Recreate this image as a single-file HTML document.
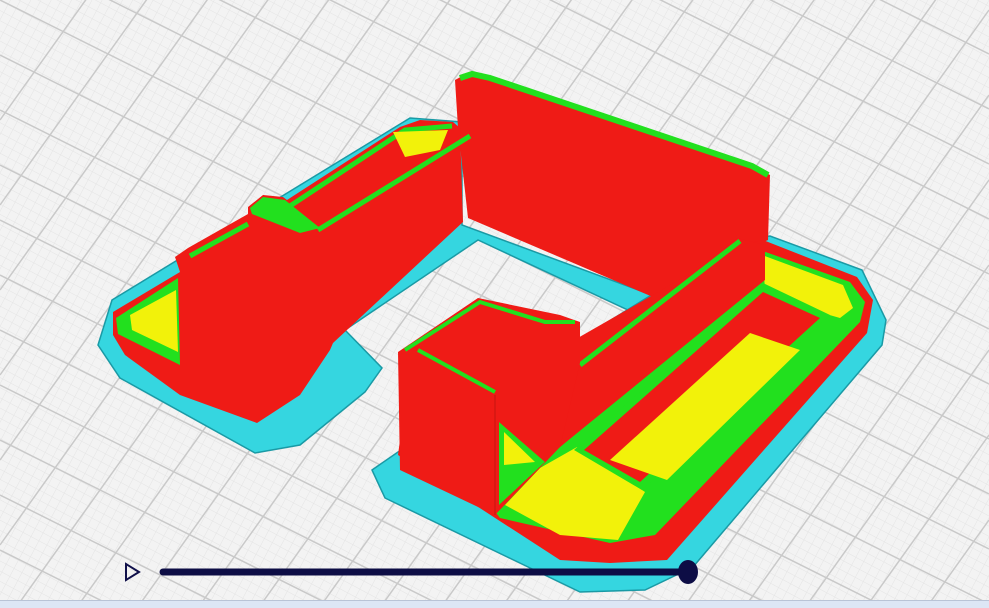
<!DOCTYPE html>
<html><head><meta charset="utf-8"><style>
html,body{margin:0;padding:0;width:989px;height:608px;overflow:hidden;background:#f1f1f1}
body{position:fixed;left:0;top:0}
svg{display:block;overflow:hidden}
</style></head><body>
<svg width="989" height="608" viewBox="0 0 989 608" xmlns="http://www.w3.org/2000/svg">
<defs>
<pattern id="fine" width="9" height="9" patternUnits="userSpaceOnUse" patternTransform="rotate(28)">
<path d="M0 0H9M0 0V9" stroke="#e4e4e4" stroke-width="1" fill="none"/>
</pattern>
</defs>
<rect width="989" height="608" fill="#f3f3f3"/>
<rect width="989" height="608" fill="url(#fine)"/>
<g stroke="#c9c9c9" stroke-width="1.5">
<line x1="0" y1="-440" x2="989" y2="54"/><line x1="0" y1="-385" x2="989" y2="109"/><line x1="0" y1="-330" x2="989" y2="164"/><line x1="0" y1="-275" x2="989" y2="219"/><line x1="0" y1="-220" x2="989" y2="274"/><line x1="0" y1="-165" x2="989" y2="329"/><line x1="0" y1="-110" x2="989" y2="384"/><line x1="0" y1="-55" x2="989" y2="439"/><line x1="0" y1="0" x2="989" y2="494"/><line x1="0" y1="55" x2="989" y2="549"/><line x1="0" y1="110" x2="989" y2="604"/><line x1="0" y1="165" x2="989" y2="659"/><line x1="0" y1="220" x2="989" y2="714"/><line x1="0" y1="275" x2="989" y2="769"/><line x1="0" y1="330" x2="989" y2="824"/><line x1="0" y1="385" x2="989" y2="879"/><line x1="0" y1="440" x2="989" y2="934"/><line x1="0" y1="495" x2="989" y2="989"/><line x1="0" y1="550" x2="989" y2="1044"/>
<line x1="0" y1="120" x2="989" y2="-1265"/><line x1="0" y1="205" x2="989" y2="-1180"/><line x1="0" y1="290" x2="989" y2="-1095"/><line x1="0" y1="375" x2="989" y2="-1010"/><line x1="0" y1="460" x2="989" y2="-925"/><line x1="0" y1="545" x2="989" y2="-840"/><line x1="0" y1="630" x2="989" y2="-755"/><line x1="0" y1="715" x2="989" y2="-670"/><line x1="0" y1="800" x2="989" y2="-585"/><line x1="0" y1="885" x2="989" y2="-500"/><line x1="0" y1="970" x2="989" y2="-415"/><line x1="0" y1="1055" x2="989" y2="-330"/><line x1="0" y1="1140" x2="989" y2="-245"/><line x1="0" y1="1225" x2="989" y2="-160"/><line x1="0" y1="1310" x2="989" y2="-75"/><line x1="0" y1="1395" x2="989" y2="10"/><line x1="0" y1="1480" x2="989" y2="95"/><line x1="0" y1="1565" x2="989" y2="180"/><line x1="0" y1="1650" x2="989" y2="265"/><line x1="0" y1="1735" x2="989" y2="350"/><line x1="0" y1="1820" x2="989" y2="435"/><line x1="0" y1="1905" x2="989" y2="520"/><line x1="0" y1="1990" x2="989" y2="605"/><line x1="0" y1="2075" x2="989" y2="690"/><line x1="0" y1="2160" x2="989" y2="775"/><line x1="0" y1="2245" x2="989" y2="860"/>
</g>
<path d="M98,345 L112,300 L410,118 L462,122 L462,225 L660,298 L645,318 L478,240 L345,330 L382,368 L365,392 L300,445 L255,453 L120,378 Z" fill="#35d6e0" stroke="#1a9aa5" stroke-width="1.5"/>
<path d="M372,470 L398,452 L740,240 L770,236 L862,270 L886,320 L882,345 L693,567 L645,590 L580,592 L385,498 Z" fill="#35d6e0" stroke="#1a9aa5" stroke-width="1.5"/>
<path d="M455,80 L470,72 L492,76 L752,165 L770,175 L768,240 L745,250 L720,262 L660,300 L468,218 L458,128 Z" fill="#ef1b16"/>
<path d="M460,78 L472,74 L490,78 L752,166 L768,175" stroke="#22e01e" stroke-width="6" fill="none"/>
<path d="M113,312 L180,272 L175,257 L188,248 L248,214 L248,207 L263,195 L283,197 L287,200 L400,127 L420,120 L453,122 L460,128 L463,222 L333,343 L330,350 L300,395 L257,423 L180,395 L125,355 L113,335 Z" fill="#ef1b16"/>
<path d="M116,318 L178,278 L180,365 L118,334 Z" fill="#22e01e"/>
<path d="M130,315 L176,290 L178,352 L132,330 Z" fill="#f2f20a"/>
<path d="M190,256 L248,224 M290,206 L405,130 L452,126 M318,230 L470,136" stroke="#22e01e" stroke-width="5" fill="none"/>
<path d="M393,132 L448,130 L440,150 L405,157 Z" fill="#f2f20a"/>
<path d="M250,208 L263,197 L285,200 L320,228 L300,233 L252,214 Z" fill="#22e01e"/>
<path d="M398,455 L560,560 L610,563 L667,560 L867,333 L873,300 L857,277 L763,240 L740,245 L400,440 Z" fill="#ef1b16"/>
<path d="M490,505 L560,447 L760,277 L760,250 L850,282 L865,302 L860,322 L655,535 L610,543 L500,518 Z" fill="#22e01e"/>
<path d="M762,255 L843,285 L853,308 L840,318 L826,314 L765,288 Z" fill="#f2f20a"/>
<path d="M505,505 L540,468 L577,447 L645,492 L618,540 L560,535 Z" fill="#f2f20a"/>
<path d="M574,450 L763,283 L830,315 L642,490 Z" fill="#22e01e"/>
<path d="M584,450 L763,292 L820,318 L640,482 Z" fill="#ef1b16"/>
<path d="M610,460 L750,333 L800,350 L667,480 Z" fill="#f2f20a"/>
<path d="M560,447 L580,363 L737,238 L765,245 L765,280 Z" fill="#ef1b16"/>
<path d="M580,365 L740,241" stroke="#22e01e" stroke-width="5"/>
<path d="M398,352 L478,298 L560,315 L580,322 L580,363 L560,447 L495,515 L400,470 Z" fill="#ef1b16"/>
<path d="M499,422 L545,462 L499,505 Z" fill="#22e01e"/>
<path d="M504,432 L535,462 L504,465 Z" fill="#f2f20a"/>
<path d="M405,350 L480,302 L545,322 L575,322 M418,350 L495,392" stroke="#22e01e" stroke-width="4" fill="none"/>
<path d="M495,395 L495,515" stroke="#c41410" stroke-width="1"/>
<rect x="0" y="600" width="989" height="8" fill="#dde6f5"/>
<line x1="0" y1="600.5" x2="989" y2="600.5" stroke="#b9c3d6"/>
<path d="M126,564 L139,572 L126,580 Z" fill="none" stroke="#10104a" stroke-width="2"/>
<line x1="163" y1="572" x2="688" y2="572" stroke="#0d0d45" stroke-width="7" stroke-linecap="round"/>
<ellipse cx="688" cy="572" rx="10" ry="12" fill="#0d0d45"/>
</svg>
</body></html>
